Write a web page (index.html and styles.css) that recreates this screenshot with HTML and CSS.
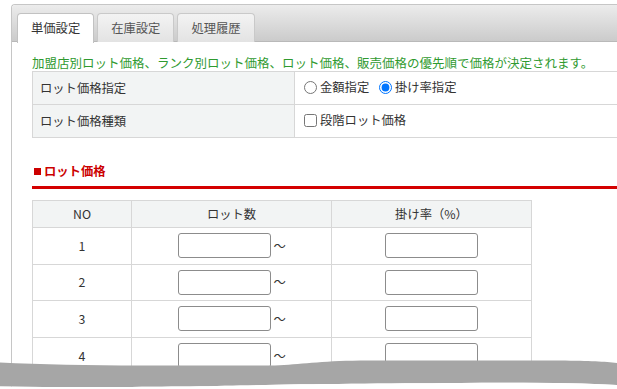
FILE: index.html
```html
<!DOCTYPE html>
<html lang="ja">
<head>
<meta charset="utf-8">
<title>単価設定</title>
<link rel="stylesheet" href="styles.css">
</head>
<body>
<div class="panel">
  <div class="tabbar">
    <ul class="tabs">
      <li class="tab active">単価設定</li>
      <li class="tab">在庫設定</li>
      <li class="tab">処理履歴</li>
    </ul>
  </div>
  <div class="content">
    <p class="note">加盟店別ロット価格、ランク別ロット価格、ロット価格、販売価格の優先順で価格が決定されます。</p>
    <table class="form">
      <tr>
        <th>ロット価格指定</th>
        <td>
          <label class="opt"><input type="radio" name="mode">金額指定</label>
          <label class="opt"><input type="radio" name="mode" checked>掛け率指定</label>
        </td>
      </tr>
      <tr>
        <th>ロット価格種類</th>
        <td><label class="opt"><input type="checkbox">段階ロット価格</label></td>
      </tr>
    </table>

    <h3 class="section"><span class="sq"></span>ロット価格</h3>

    <table class="lots">
      <tr>
        <th class="c-no">NO</th>
        <th class="c-lot">ロット数</th>
        <th class="c-rate">掛け率（%）</th>
      </tr>
      <tr>
        <td>1</td>
        <td><input class="box" type="text"><span class="tilde">～</span></td>
        <td><input class="box" type="text"></td>
      </tr>
      <tr>
        <td>2</td>
        <td><input class="box" type="text"><span class="tilde">～</span></td>
        <td><input class="box" type="text"></td>
      </tr>
      <tr>
        <td>3</td>
        <td><input class="box" type="text"><span class="tilde">～</span></td>
        <td><input class="box" type="text"></td>
      </tr>
      <tr>
        <td>4</td>
        <td><input class="box" type="text"><span class="tilde">～</span></td>
        <td><input class="box" type="text"></td>
      </tr>
    </table>
  </div>
</div>
<svg class="tear" width="617" height="389" viewBox="0 0 617 389">
  <path d="M0,362.5 C40,364.5 90,365.5 140,365.5 L275,365.5 C300,364.5 320,361 360,360.5 L560,360.5 C590,360.8 605,361.5 617,363 L617,385 C580,383 520,382.5 460,383 C380,383.5 300,384 240,385.5 C180,387 80,387.5 0,386.5 Z" fill="#a6a6a6"/>
  <path d="M0,386.5 C80,387.5 180,387 240,385.5 C300,384 380,383.5 460,383 C520,382.5 580,383 617,385 L617,389 L0,389 Z" fill="#ffffff"/>
</svg>
</body>
</html>
```

FILE: styles.css
```css
html, body {
  margin: 0;
  padding: 0;
  background: #fff;
  overflow: hidden;
  width: 617px;
  height: 389px;
}
body {
  font-family: "Noto Sans CJK JP", "Noto Sans", sans-serif;
  font-size: 12.3px;
  color: #333;
  position: relative;
}
.panel {
  margin: 4px 0 0 11px;
  width: 606px;
  height: 385px;
  box-sizing: border-box;
  overflow: hidden;
  border: 1px solid #c6c6c6;
  border-right: none;
  border-bottom: none;
  border-radius: 4px 0 0 0;
  background: #fff;
}
.tabbar {
  height: 36px;
  background: linear-gradient(#ececec, #cbcbcb);
  border-bottom: 1px solid #b9b9b9;
  border-radius: 3px 0 0 0;
}
.tabs {
  list-style: none;
  margin: 0;
  padding: 8px 0 0 5px;
  display: flex;
  gap: 3px;
}
.tab {
  height: 28px;
  line-height: 28px;
  padding: 0 13px;
  border: 1px solid #c9c9c9;
  border-bottom: none;
  border-radius: 4px 4px 0 0;
  background: linear-gradient(#f3f3f3, #e3e3e3);
  color: #555;
}
.tab.active {
  background: #fff;
  height: 29px;
  color: #333;
  border-color: #c2c2c2;
}
.content {
  padding: 0 0 0 20px;
}
.note {
  margin: 0;
  padding-top: 12px;
  line-height: 17px;
  font-size: 12.5px;
  color: #2f9a2f;
  white-space: nowrap;
}
table {
  border-collapse: collapse;
}
.form {
  width: 600px;
}
.form th, .form td {
  border: 1px solid #d7d7d7;
  height: 32px;
  padding: 0;
  font-weight: normal;
  text-align: left;
}
.form th {
  width: 254px;
  padding-left: 7px;
  background: #f2f4f4;
}
.form td {
  padding-left: 9px;
}
.opt {
  display: inline-flex;
  align-items: center;
  margin-right: 7px;
}
.opt input {
  margin: 0 3px 0 0;
  width: 13px;
  height: 13px;
}
.section {
  margin: 23px 0 0 0;
  padding: 0 0 5px 2px;
  font-size: 12.3px;
  line-height: 20px;
  color: #cc0000;
  font-weight: bold;
  border-bottom: 3px solid #d40000;
  display: flex;
  align-items: center;
}
.sq {
  width: 7px;
  height: 7px;
  background: #cc0000;
  margin-right: 3px;
}
.lots {
  margin-top: 11px;
  width: 500px;
  table-layout: fixed;
}
.lots th, .lots td {
  border: 1px solid #d7d7d7;
  text-align: center;
  padding: 0;
}
.lots th {
  background: #f2f4f4;
  font-weight: normal;
  height: 26px;
}
.lots td {
  height: 35.6px;
}
.c-no { width: 98px; }
.c-lot { width: 199px; }
.c-rate { width: 199px; }
.box {
  width: 93px;
  height: 25px;
  box-sizing: border-box;
  border: 1px solid #8c8c8c;
  border-radius: 3px;
  margin: 0;
  padding: 0;
  vertical-align: middle;
  background: #fff;
}
.tilde {
  display: inline-block;
  width: 12px;
  margin-left: 3px;
  vertical-align: middle;
  color: #333;
}
.tear {
  position: absolute;
  left: 0;
  top: 0;
  pointer-events: none;
}
```
